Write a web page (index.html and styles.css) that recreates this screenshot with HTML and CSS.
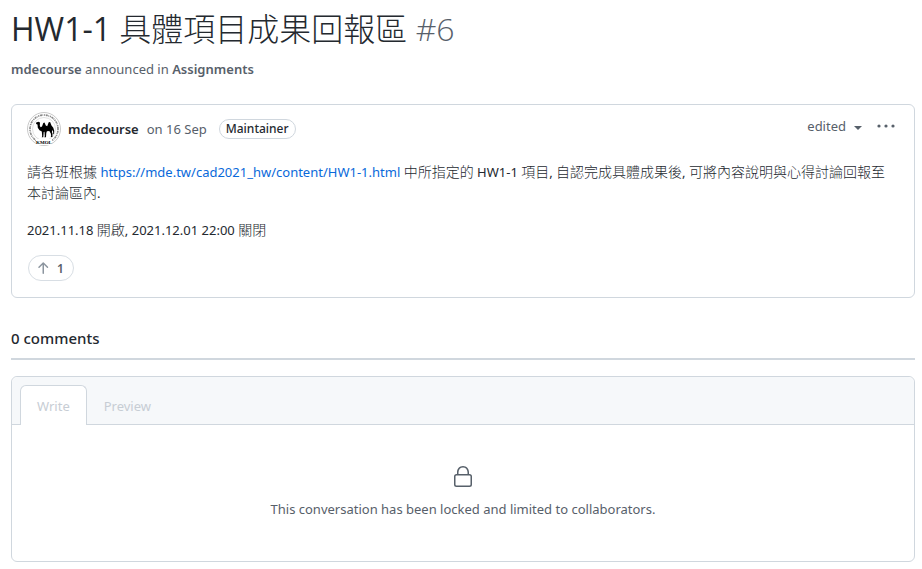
FILE: index.html
```html
<!DOCTYPE html>
<html lang="en">
<head>
<meta charset="utf-8">
<meta name="viewport" content="width=device-width, initial-scale=1">
<title>HW1-1 具體項目成果回報區 #6</title>
<link rel="stylesheet" href="styles.css">
</head>
<body>
<main class="page">
  <header class="discussion-header">
    <h1 class="title">HW1-1 <span class="zh" lang="zh-Hant">具體項目成果回報區</span> <span class="number">#6</span></h1>
    <p class="byline"><a href="#">mdecourse</a> announced in <a href="#">Assignments</a></p>
  </header>

  <article class="post">
    <div class="post-header">
      <svg class="avatar" viewBox="0 0 34 34" role="img" aria-label="mdecourse">
        <circle cx="17" cy="17" r="16.5" fill="#fff" stroke="#c9c9c9"/>
        <circle cx="17" cy="17" r="14" fill="none" stroke="#888" stroke-width="1.6" stroke-dasharray="1.2 .7 2 .5 .8 .8" pathLength="88"/>
        <circle cx="17" cy="17" r="11.5" fill="none" stroke="#ccc" stroke-width=".6"/>
        <path d="M9 27h16v6H9z" fill="#fff"/>
        <path d="M9.2 10.4l2.3-.7 1.5.8-.2 3.2.8 1.5 1.4-.6 1.3-3.6 1.2-.5 1.3 3 1.4.8 1.5-4 1.4-.2 1.4 3.5 1.8 2.2.9 3-.2 3.4-.7-.1-.2-2.8-.8-1.2-.4 2.2.6 1.2-.1 3.4h-1.7l.5-.8-.4-2.7-1.5-2.5-2.4.4-.6 1.7-.3 4.3h-1.7l.5-1-.3-4.5-.8.2-.4 5.3h-1.6l.5-1-.4-4.7-2.3-1.3-1.7-2.5-.3-3.3-1.4-.4z" fill="#000"/>
        <text x="17" y="32" class="avatar-text">KMOL</text>
      </svg>
      <a class="author" href="#">mdecourse</a>
      <a class="date" href="#">on 16 Sep</a>
      <span class="label">Maintainer</span>
      <div class="actions">
        <button class="edited" type="button">edited <span class="caret"></span></button>
        <button class="more" type="button" aria-label="Show options">
          <svg width="20" height="16" viewBox="0 0 20 16" fill="currentColor"><circle cx="3" cy="8" r="1.6"/><circle cx="10" cy="8" r="1.6"/><circle cx="17" cy="8" r="1.6"/></svg>
        </button>
      </div>
    </div>
    <div class="post-body">
      <p><span class="zh" lang="zh-Hant">請各班根據</span> <a href="#">https://mde.tw/cad2021_hw/content/HW1-1.html</a> <span class="zh" lang="zh-Hant">中所指定的</span> HW1-1 <span class="zh" lang="zh-Hant">項目</span>, <span class="zh" lang="zh-Hant">自認完成具體成果後</span>, <span class="zh" lang="zh-Hant">可將內容說明與心得討論回報至本討論區內</span>.</p>
      <p>2021.11.18 <span class="zh" lang="zh-Hant">開啟</span>, 2021.12.01 22:00 <span class="zh" lang="zh-Hant">關閉</span></p>
    </div>
    <button class="upvote" type="button" aria-label="Upvote: 1">
      <svg width="16" height="16" viewBox="0 0 16 16" fill="currentColor"><path d="M3.47 7.78a.75.75 0 010-1.06l4.25-4.25a.75.75 0 011.06 0l4.25 4.25a.75.75 0 01-1.06 1.06L9 4.81v8.44a.75.75 0 01-1.5 0V4.81L4.53 7.78a.75.75 0 01-1.06 0z"/></svg>
      <span>1</span>
    </button>
  </article>

  <h2 class="comments-title">0 comments</h2>

  <section class="composer">
    <div class="tabs">
      <button class="tab tab-selected" type="button" disabled>Write</button>
      <button class="tab" type="button" disabled>Preview</button>
    </div>
    <div class="locked">
      <svg width="24" height="24" viewBox="0 0 24 24" fill="currentColor" aria-hidden="true"><path fill-rule="evenodd" d="M6 9V7.25C6 3.845 8.503 1 12 1s6 2.845 6 6.25V9h.5a2.5 2.5 0 012.5 2.5v8a2.5 2.5 0 01-2.5 2.5h-13A2.5 2.5 0 013 19.5v-8A2.5 2.5 0 015.5 9H6zm1.5-1.75C7.5 4.58 9.422 2.5 12 2.5c2.578 0 4.5 2.08 4.5 4.75V9h-9V7.25zm-3 4.25a1 1 0 011-1h13a1 1 0 011 1v8a1 1 0 01-1 1h-13a1 1 0 01-1-1v-8z"/></svg>
      <p>This conversation has been locked and limited to collaborators.</p>
    </div>
  </section>
</main>
</body>
</html>
```
FILE: styles.css
```css
* {
  box-sizing: border-box;
}

body {
  margin: 0;
  background: #fff;
  color: #24292f;
  font: 13px/21px "Noto Sans", "Noto Sans CJK TC", sans-serif;
}

h1, h2, p {
  margin: 0;
}

a {
  color: inherit;
  text-decoration: none;
}

button {
  font: inherit;
  color: inherit;
  background: none;
  border: 0;
  padding: 0;
}

.page {
  padding: 9px 7px 7px 11px;
}

.title {
  font: 400 32px/40px "Open Sans", "Noto Sans CJK TC", sans-serif;
}

.title .zh {
  font-weight: 300;
}

.number {
  color: #57606a;
  font-weight: 300;
}

.byline {
  margin-top: 10px;
  color: #57606a;
}

.byline a {
  font-weight: 600;
}

.post {
  margin-top: 24px;
  padding: 7px 15px 16px;
  border: 1px solid #d0d7de;
  border-radius: 6px;
}

.post-header {
  display: flex;
  align-items: center;
}

.avatar {
  width: 34px;
  height: 34px;
}

.avatar-text {
  font: bold 5px "Liberation Serif", serif;
  text-anchor: middle;
}

.author {
  margin: 0 8px 0 7px;
  font-weight: 600;
}

.date {
  color: #57606a;
}

.label {
  margin-left: 12px;
  padding: 0 6px;
  border: 1px solid #d0d7de;
  border-radius: 10px;
  font-size: 12px;
  line-height: 18px;
  font-weight: 500;
}

.actions {
  display: flex;
  align-items: center;
  gap: 14px;
  margin: 0 3px 6px auto;
  color: #57606a;
}

.edited {
  display: flex;
  align-items: center;
  gap: 8px;
}

.caret {
  margin-top: 4px;
  border: 4px solid transparent;
  border-top-color: currentColor;
  border-bottom: 0;
}

.more {
  display: flex;
}

.post-body {
  display: grid;
  gap: 16px;
  margin-top: 16px;
  padding-right: 4px;
}

.post-body a {
  color: #0969da;
}

.post-body .zh {
  font-size: 14px;
  line-height: 16px;
  font-weight: 300;
}

.upvote {
  display: flex;
  align-items: center;
  gap: 6px;
  margin: 14px 0 0 1px;
  padding: 0 9px 0 6px;
  height: 26px;
  border: 1px solid #d8dee4;
  border-radius: 13px;
  color: #57606a;
  font-size: 12px;
  font-weight: 600;
}

.upvote svg {
  color: #8c959f;
}

.comments-title {
  margin-top: 28px;
  padding-bottom: 8px;
  border-bottom: 2px solid #d0d7de;
  font-size: 15px;
  line-height: 24px;
  font-weight: 500;
}

.composer {
  margin-top: 16px;
  border: 1px solid #d0d7de;
  border-radius: 6px;
}

.tabs {
  display: flex;
  padding: 8px 8px 0;
  border-bottom: 1px solid #d0d7de;
  border-radius: 6px 6px 0 0;
  background: #f6f8fa;
}

.tab {
  margin-bottom: -1px;
  padding: 9px 16px 7px;
  border: 1px solid transparent;
  border-bottom: 0;
  line-height: 23px;
  color: #c7cdd4;
}

.tab-selected {
  border-color: #d0d7de;
  border-radius: 6px 6px 0 0;
  background: #fff;
}

.locked {
  display: flex;
  flex-direction: column;
  align-items: center;
  gap: 10px;
  padding: 40px 16px 41px;
  color: #57606a;
}
```
